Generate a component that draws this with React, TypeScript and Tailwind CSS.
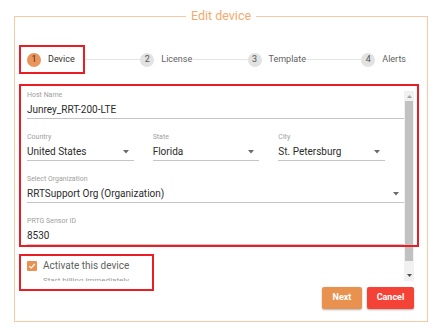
function Step({ n, label, active }: { n: number; label: string; active?: boolean }) {
  return (
    <div className="flex items-center gap-[7px]">
      <span
        className={
          active
            ? "flex h-[14px] w-[14px] items-center justify-center rounded-full bg-[#e9955b] text-[9px] text-[#5a3010]"
            : "flex h-[14px] w-[14px] items-center justify-center rounded-full bg-[#e2e2e2] text-[9px] text-[#555]"
        }
      >
        {n}
      </span>
      <span className={active ? "text-[9px] text-[#333]" : "text-[9px] text-[#616161]"}>{label}</span>
    </div>
  );
}

function Caret() {
  return (
    <svg width="6" height="4" viewBox="0 0 6 4" className="absolute right-[5px] top-[8px]">
      <path d="M0 0 L6 0 L3 3.5 Z" fill="#6b6b6b" />
    </svg>
  );
}

function Field({ label, value, select }: { label: string; value: string; select?: boolean }) {
  return (
    <div className="flex flex-col">
      <span className="h-[9px] text-[7px] leading-[9px] text-[#a0a0a0]">{label}</span>
      <div className="relative h-[19px] border-b border-[#c4c4c4] pt-[2px] text-[10px] leading-[15px] text-[#2b2b2b]">
        {value}
        {select && <Caret />}
      </div>
    </div>
  );
}

export default function App() {
  return (
    <div className="h-[336px] w-[442px] bg-white pt-[8px]" style={{ fontFamily: "Roboto, 'Liberation Sans', sans-serif" }}>
      <fieldset className="mx-[14px] border border-[#f7c9a4]">
        <legend className="mx-auto px-[5px] text-[12.5px] leading-[16px] text-[#f3aa6e]">Edit device</legend>
        <div className="relative pb-[12px] pl-[4px] pr-[13px] pt-[21px]">
          <div className="flex h-[29px] items-center pr-[8px]">
            <div className="flex h-[29px] w-[66px] items-center border-2 border-[#ec1c24] pl-[6px]">
              <Step n={1} label="Device" active />
            </div>
            <div className="h-px flex-1 bg-[#e4e4e4]" />
            <Step n={2} label="License" />
            <div className="h-px flex-1 bg-[#e4e4e4]" />
            <Step n={3} label="Template" />
            <div className="h-px flex-1 bg-[#e4e4e4]" />
            <Step n={4} label="Alerts" />
          </div>

          <div className="mt-[17px] flex h-[190px]">
            <div className="flex flex-1 flex-col gap-[14px] overflow-hidden pl-[8px]">
              <Field label="Host Name" value="Junrey_RRT-200-LTE" />
              <div className="grid grid-cols-3">
                <div className="pr-[19px]">
                  <Field label="Country" value="United States" select />
                </div>
                <div className="pr-[19px]">
                  <Field label="State" value="Florida" select />
                </div>
                <div className="pr-[19px]">
                  <Field label="City" value="St. Petersburg" select />
                </div>
              </div>
              <Field label="Select Organization" value="RRTSupport Org (Organization)" select />
              <Field label="PRTG Sensor ID" value="8530" />
              <div className="mt-[1px] flex flex-col">
                <div className="flex items-center gap-[6px]">
                  <span className="flex h-[10px] w-[10px] items-center justify-center rounded-[1px] bg-[#ea9152]">
                    <svg width="8" height="8" viewBox="0 0 8 8">
                      <path d="M1.3 4.2 L3.2 6 L6.8 2" stroke="white" strokeWidth="1.2" fill="none" />
                    </svg>
                  </span>
                  <span className="text-[10px] leading-[12px] text-[#5f5f5f]">Activate this device</span>
                </div>
                <span className="mt-[4px] pl-[16px] text-[8px] leading-[10px] text-[#9a9a9a]">Start billing immediately</span>
              </div>
            </div>
            <div className="flex w-[10px] flex-col bg-[#f1f1f1]">
              <div className="flex h-[10px] items-center justify-center">
                <svg width="5" height="3" viewBox="0 0 5 3">
                  <path d="M0 3 L5 3 L2.5 0 Z" fill="#a3a3a3" />
                </svg>
              </div>
              <div className="mx-[1px] h-[160px] bg-[#c1c1c1]" />
              <div className="flex-1" />
              <div className="flex h-[11px] items-center justify-center">
                <svg width="5" height="3" viewBox="0 0 5 3">
                  <path d="M0 0 L5 0 L2.5 3 Z" fill="#505050" />
                </svg>
              </div>
            </div>
          </div>

          <div className="mt-[6px] flex justify-end gap-[5px]">
            <button className="h-[22px] w-[40px] rounded-[2px] bg-[#e9924f] text-[9px] font-bold text-white shadow-[0_1px_2px_rgba(0,0,0,0.3)]">
              Next
            </button>
            <button className="h-[22px] w-[47px] rounded-[2px] bg-[#f44336] text-[9px] font-bold text-white shadow-[0_1px_2px_rgba(0,0,0,0.3)]">
              Cancel
            </button>
          </div>

          <div className="pointer-events-none absolute left-[4px] top-[60px] h-[163px] w-[400px] border-2 border-[#ec1c24]" />
          <div className="pointer-events-none absolute left-[4px] top-[230px] h-[37px] w-[135px] border-2 border-[#ec1c24]" />
        </div>
      </fieldset>
    </div>
  );
}
